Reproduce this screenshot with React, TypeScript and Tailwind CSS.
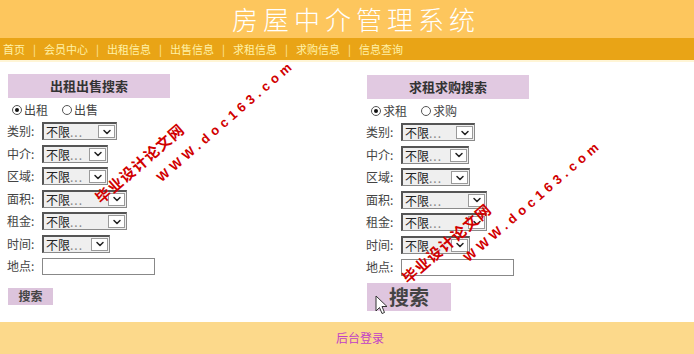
import { ChevronDown } from "lucide-react";

const FONT = { fontFamily: '"Noto Sans CJK SC", "Noto Sans", sans-serif' };

const navItems = ["首页", "会员中心", "出租信息", "出售信息", "求租信息", "求购信息", "信息查询"];

function FakeSelect({ width }: { width: number }) {
    return (
        <div
            className="flex h-[18px] items-stretch border border-[#8a8a8a] border-t-2 border-l-2 border-t-[#555] border-l-[#555] bg-[#efefef]"
            style={{ width }}
        >
            <div className="flex-1 pl-[2px] text-[12px] leading-[15px] text-[#222]">不限<span className="text-[#888] tracking-[1px]">...</span></div>
            <div className="my-[1px] mr-[1px] flex w-[17px] items-center justify-center border border-[#9a9a9a] bg-white">
                <ChevronDown className="size-[12px] text-[#222]" strokeWidth={3} />
            </div>
        </div>
    );
}

function Radio({ checked, label }: { checked: boolean; label: string }) {
    return (
        <div className="flex items-center">
            <div className="mr-[2px] flex size-[10px] items-center justify-center rounded-full border border-[#555] bg-white">
                {checked && <div className="size-[4px] rounded-full bg-[#111]" />}
            </div>
            <span>{label}</span>
        </div>
    );
}

function SearchPanel({ title, radios, widths, big }: { title: string; radios: string[]; widths: number[]; big?: boolean }) {
    const labels = ["类别", "中介", "区域", "面积", "租金", "时间"];
    return (
        <div className="text-[12px] text-[#444]">
            <div className="ml-[1px] flex h-[24px] w-[162px] items-center justify-center bg-[#e1c9e1] text-[13px] font-bold text-[#333]">
                {title}
            </div>
            <div className="mt-[2px] flex h-[20px] items-center gap-[14px] pl-[5px]">
                <Radio checked label={radios[0]} />
                <Radio checked={false} label={radios[1]} />
            </div>
            {labels.map((l, i) => (
                <div key={l} className="flex h-[22.5px] items-center">
                    <span className="w-[35px]">{l}:</span>
                    <FakeSelect width={widths[i]} />
                </div>
            ))}
            <div className="flex h-[22.5px] items-center">
                <span className="w-[35px]">地点:</span>
                <div className="h-[17px] w-[113px] border border-[#888] bg-white" />
            </div>
            {big ? (
                <div className="mt-[4px] ml-[1px] flex h-[28px] w-[84px] items-center justify-center bg-[#dfc6df] text-[20px] font-bold text-[#444]">
                    搜索
                </div>
            ) : (
                <div className="mt-[10px] ml-[1px] flex h-[17px] w-[45px] items-center justify-center bg-[#dcc4dc] text-[12px] font-bold text-[#444]">
                    搜索
                </div>
            )}
        </div>
    );
}

function Watermark({ left, top }: { left: number; top: number }) {
    return (
        <div
            className="pointer-events-none absolute origin-top-left font-bold text-[#d10000]"
            style={{ left, top, transform: "rotate(-41deg)" }}
        >
            <div className="whitespace-nowrap text-[15px] leading-[16px] tracking-[1px]">毕业设计论文网</div>
            <div
                className="ml-[60px] mt-[10px] whitespace-nowrap text-[13px] leading-[14px] tracking-[4.5px]"
                style={{ fontFamily: '"Liberation Sans", Arial, sans-serif' }}
            >
                WWW.doc163.com
            </div>
        </div>
    );
}

export default function App() {
    return (
        <div className="relative h-[354px] w-[694px] bg-white" style={FONT}>
            <div className="flex h-[38px] items-center justify-center bg-[#fdc65d]">
                <div className="pl-[18px] text-[26px] font-light leading-[38px] tracking-[5px] text-white">
                    房屋中介管理系统
                </div>
            </div>
            <div className="flex h-[22px] items-center bg-[#e9a416] pl-[3px] text-[11px] text-[#fff1a6]">
                {navItems.map((n, i) => (
                    <span key={n} className="flex items-center">
                        {i > 0 && <span className="mx-[8px] text-[#fde7a0]">|</span>}
                        {n}
                    </span>
                ))}
            </div>
            <div className="h-[2px] bg-[#fff5d6]" />
            <div className="grid h-[260px] grid-cols-2">
                <div className="pl-[7px] pt-[12px]">
                    <SearchPanel title="出租出售搜索" radios={["出租", "出售"]} widths={[75, 66, 66, 85, 85, 68]} />
                </div>
                <div className="pl-[19px] pt-[13px]">
                    <SearchPanel title="求租求购搜索" radios={["求租", "求购"]} widths={[74, 68, 69, 86, 86, 69]} big />
                </div>
            </div>
            <div className="flex h-[32px] items-center justify-center bg-[#fcd98b] pl-[26px] text-[12px] text-[#c13fc6]">
                后台登录
            </div>

            <Watermark left={92} top={194} />
            <Watermark left={399} top={274} />

            <svg className="absolute left-[375px] top-[295px]" width="14" height="20" viewBox="0 0 14 20">
                <path d="M1 1 L1 16 L4.5 12.5 L7 18.5 L9.5 17.5 L7 11.5 L12 11.5 Z" fill="white" stroke="#333" strokeWidth="1" />
            </svg>
        </div>
    );
}
